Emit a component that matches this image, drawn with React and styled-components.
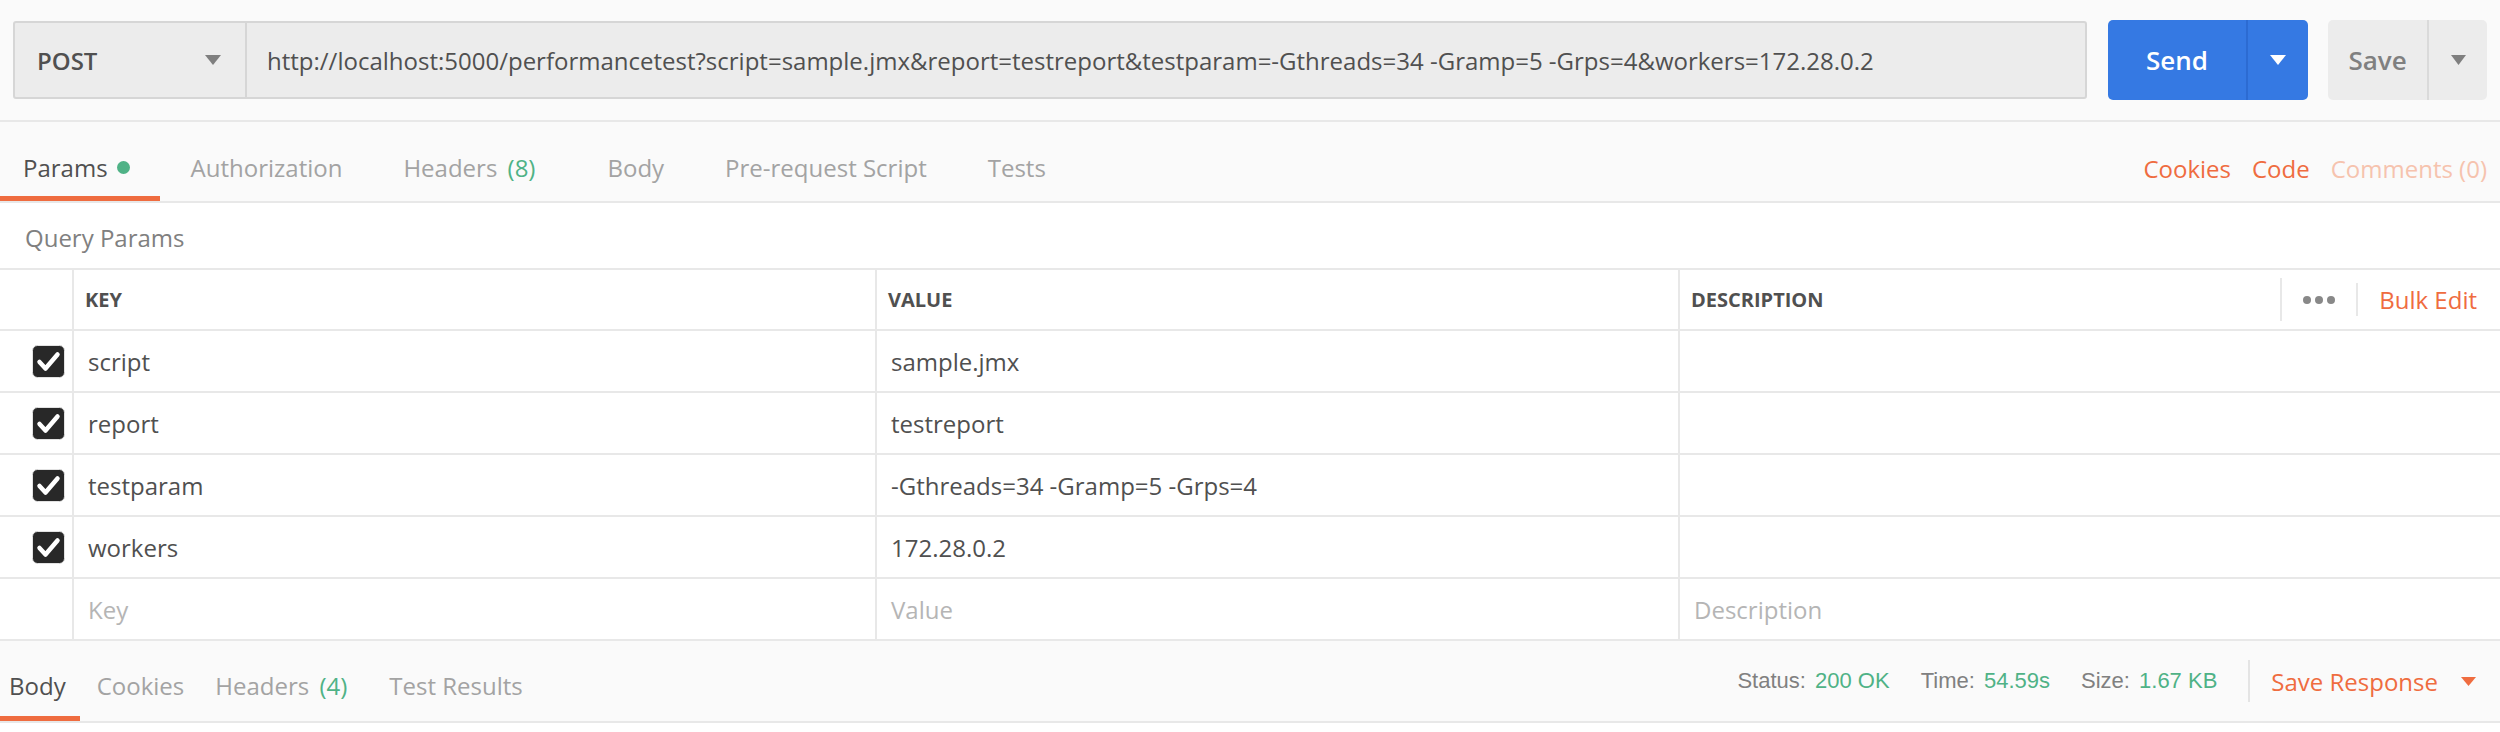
import React from 'react';
import styled, { createGlobalStyle } from 'styled-components';

const ORANGE = '#ef6c3f';
const GREEN = '#4fb286';
const LINE = '#e8e8e8';

const GlobalStyle = createGlobalStyle`
    html, body {
        margin: 0;
        padding: 0;
        background: #fff;
    }
    body {
        font-family: "Open Sans", "Liberation Sans", sans-serif;
        color: #505050;
    }
    * {
        box-sizing: border-box;
    }
`;

const params = [
    { key: 'script', value: 'sample.jmx' },
    { key: 'report', value: 'testreport' },
    { key: 'testparam', value: '-Gthreads=34 -Gramp=5 -Grps=4' },
    { key: 'workers', value: '172.28.0.2' },
];

const url =
    'http://localhost:5000/performancetest?script=sample.jmx&report=testreport&testparam=-Gthreads=34 -Gramp=5 -Grps=4&workers=172.28.0.2';

const Caret = ({ color, width = 16, height = 10 }) => (
    <svg width={ width } height={ height } viewBox='0 0 16 10' preserveAspectRatio='none'>
        <polygon points='0,0 16,0 8,10' fill={ color } />
    </svg>
);

const Check = () => (
    <svg width='33' height='33' viewBox='0 0 33 33'>
        <rect x='0.5' y='0.5' width='32' height='32' rx='5' fill='#282828' stroke='#e2e2e2' />
        <polyline
            points='7.5,17 13.5,23.5 25.5,9.5'
            fill='none'
            stroke='#fff'
            strokeWidth='4.5'
            strokeLinecap='round'
            strokeLinejoin='round'
        />
    </svg>
);

const Dots = () => (
    <svg width='32' height='8' viewBox='0 0 32 8'>
        <circle cx='4' cy='4' r='4' fill='#888' />
        <circle cx='16' cy='4' r='4' fill='#888' />
        <circle cx='28' cy='4' r='4' fill='#888' />
    </svg>
);

export default function App() {
    return (
        <Page>
            <GlobalStyle />
            <TopBar>
                <UrlGroup>
                    <MethodSelect>
                        <span>POST</span>
                        <Caret color='#7f7f7f' />
                    </MethodSelect>
                    <UrlText>{ url }</UrlText>
                </UrlGroup>
                <SplitButton primary>
                    <ButtonLabel>Send</ButtonLabel>
                    <ButtonArrow primary>
                        <Caret color='#fff' />
                    </ButtonArrow>
                </SplitButton>
                <SplitButton>
                    <ButtonLabel>Save</ButtonLabel>
                    <ButtonArrow>
                        <Caret color='#7f7f7f' width={ 15 } />
                    </ButtonArrow>
                </SplitButton>
            </TopBar>

            <TabBar>
                <Tabs>
                    <Tab active>
                        Params
                        <Dot />
                    </Tab>
                    <Tab>Authorization</Tab>
                    <Tab>
                        Headers <Count>(8)</Count>
                    </Tab>
                    <Tab>Body</Tab>
                    <Tab>Pre-request Script</Tab>
                    <Tab>Tests</Tab>
                </Tabs>
                <Links>
                    <Link>Cookies</Link>
                    <Link>Code</Link>
                    <Link muted>Comments (0)</Link>
                </Links>
            </TabBar>

            <SectionTitle>Query Params</SectionTitle>

            <Table>
                <HeadRow>
                    <Cell />
                    <HeadCell>Key</HeadCell>
                    <HeadCell>Value</HeadCell>
                    <HeadCell last>
                        Description
                        <HeadTools>
                            <ToolDivider tall />
                            <Dots />
                            <ToolDivider />
                            <BulkEdit>Bulk Edit</BulkEdit>
                        </HeadTools>
                    </HeadCell>
                </HeadRow>
                { params.map(p => (
                    <Row key={ p.key }>
                        <CheckCell>
                            <Check />
                        </CheckCell>
                        <Cell>{ p.key }</Cell>
                        <Cell>{ p.value }</Cell>
                        <Cell last />
                    </Row>
                )) }
                <Row>
                    <Cell />
                    <Cell placeholder>Key</Cell>
                    <Cell placeholder>Value</Cell>
                    <Cell last placeholder>Description</Cell>
                </Row>
            </Table>

            <ResponseBar>
                <ResponseTabs>
                    <ResponseTab active>Body</ResponseTab>
                    <ResponseTab>Cookies</ResponseTab>
                    <ResponseTab>
                        Headers <Count>(4)</Count>
                    </ResponseTab>
                    <ResponseTab>Test Results</ResponseTab>
                </ResponseTabs>
                <Stats>
                    <Stat>
                        Status: <StatValue>200 OK</StatValue>
                    </Stat>
                    <Stat>
                        Time: <StatValue>54.59s</StatValue>
                    </Stat>
                    <Stat>
                        Size: <StatValue>1.67 KB</StatValue>
                    </Stat>
                </Stats>
                <SaveResponse>
                    Save Response
                    <Caret color={ ORANGE } width={ 15 } height={ 9 } />
                </SaveResponse>
            </ResponseBar>
        </Page>
    );
}

const Page = styled.div`
    width: 2500px;
    min-height: 732px;
    background: #fff;
`;

const TopBar = styled.div`
    display: flex;
    align-items: center;
    height: 122px;
    padding: 20px 13px;
    background: #fafafa;
    border-bottom: 2px solid ${ LINE };
`;

const UrlGroup = styled.div`
    flex: 1;
    display: flex;
    height: 78px;
    background: #ececec;
    border: 2px solid #d6d6d6;
    border-radius: 3px;
    font-size: 24px;
`;

const MethodSelect = styled.div`
    width: 232px;
    display: flex;
    align-items: center;
    justify-content: space-between;
    padding: 0 24px 0 22px;
    border-right: 2px solid #d6d6d6;
    font-weight: 600;
    color: #505050;
`;

const UrlText = styled.div`
    display: flex;
    align-items: center;
    padding-left: 20px;
    white-space: nowrap;
    overflow: hidden;
    color: #505050;
`;

const SplitButton = styled.div`
    display: flex;
    height: 80px;
    margin-left: ${ p => (p.primary ? '21px' : '20px') };
    border-radius: 5px;
    background: ${ p => (p.primary ? '#3579e3' : '#ececec') };
    color: ${ p => (p.primary ? '#fff' : '#808080') };
    font-size: 26px;
    font-weight: 600;

    & > :first-child {
        width: ${ p => (p.primary ? '138px' : '99px') };
    }
`;

const ButtonLabel = styled.div`
    display: flex;
    align-items: center;
    justify-content: center;
`;

const ButtonArrow = styled.div`
    width: ${ p => (p.primary ? '62px' : '60px') };
    display: flex;
    align-items: center;
    justify-content: center;
    border-left: 2px solid ${ p => (p.primary ? '#2c6bd2' : '#dadada') };
`;

const TabBar = styled.div`
    display: flex;
    justify-content: space-between;
    height: 81px;
    background: #fafafa;
    border-bottom: 2px solid ${ LINE };
`;

const Tabs = styled.div`
    display: flex;
    gap: 8px;
`;

const Tab = styled.div`
    display: flex;
    align-items: center;
    padding: 16px 30px 0 23px;
    font-size: 24px;
    white-space: pre;
    color: ${ p => (p.active ? '#505050' : '#a3a3a3') };
    border-bottom: 5px solid ${ p => (p.active ? ORANGE : 'transparent') };
`;

const Dot = styled.span`
    width: 13px;
    height: 13px;
    margin-left: 9px;
    border-radius: 50%;
    background: ${ GREEN };
`;

const Count = styled.span`
    margin: 0 11px 0 4px;
    color: ${ GREEN };
`;

const Links = styled.div`
    display: flex;
    align-items: center;
    gap: 21px;
    padding: 14px 13px 0 0;
`;

const Link = styled.span`
    font-size: 24px;
    color: ${ p => (p.muted ? '#f6c3ae' : ORANGE) };
`;

const SectionTitle = styled.div`
    display: flex;
    align-items: center;
    height: 65px;
    padding: 4px 0 0 25px;
    font-size: 24px;
    color: #808080;
`;

const Table = styled.div`
    border-top: 2px solid ${ LINE };
`;

const Row = styled.div`
    display: grid;
    grid-template-columns: 74px 803px 803px 1fr;
    height: 62px;
    border-bottom: 2px solid ${ LINE };
    font-size: 24px;
`;

const HeadRow = styled(Row)`
    height: 61px;
`;

const Cell = styled.div`
    display: flex;
    align-items: center;
    padding-left: 14px;
    border-right: ${ p => (p.last ? 'none' : `2px solid ${ LINE }`) };
    color: ${ p => (p.placeholder ? '#b5b5b5' : '#505050') };
    white-space: nowrap;
`;

const CheckCell = styled(Cell)`
    justify-content: flex-end;
    padding: 0 7px 0 0;
`;

const HeadCell = styled(Cell)`
    padding-left: 11px;
    font-size: 20px;
    font-weight: 700;
    text-transform: uppercase;
`;

const HeadTools = styled.div`
    display: flex;
    align-items: center;
    gap: 21px;
    margin-left: auto;
    padding-right: 23px;
    text-transform: none;
`;

const ToolDivider = styled.span`
    width: 2px;
    height: ${ p => (p.tall ? '43px' : '33px') };
    background: ${ LINE };
`;

const BulkEdit = styled.span`
    font-size: 24px;
    font-weight: 400;
    color: ${ ORANGE };
`;

const ResponseBar = styled.div`
    display: flex;
    align-items: stretch;
    height: 82px;
    background: #fafafa;
    border-bottom: 2px solid ${ LINE };
`;

const ResponseTabs = styled.div`
    display: flex;
`;

const ResponseTab = styled.div`
    display: flex;
    align-items: center;
    padding: 14px 14px 0 9px;
    margin-right: 8px;
    font-size: 24px;
    white-space: pre;
    color: ${ p => (p.active ? '#505050' : '#a3a3a3') };
    border-bottom: 5px solid ${ p => (p.active ? ORANGE : 'transparent') };
`;

const Stats = styled.div`
    display: flex;
    align-items: center;
    gap: 31px;
    margin-left: auto;
    padding-right: 31px;
    border-right: 2px solid #e4e4e4;
    margin-top: 19px;
    margin-bottom: 19px;
    font-family: "Liberation Sans", Arial, sans-serif;
    font-size: 22px;
`;

const Stat = styled.span`
    color: #808080;
    white-space: pre;
`;

const StatValue = styled.span`
    color: ${ GREEN };
    margin-left: 3px;
`;

const SaveResponse = styled.div`
    display: flex;
    align-items: center;
    gap: 23px;
    padding: 0 24px 0 21px;
    font-size: 24px;
    color: ${ ORANGE };
`;
